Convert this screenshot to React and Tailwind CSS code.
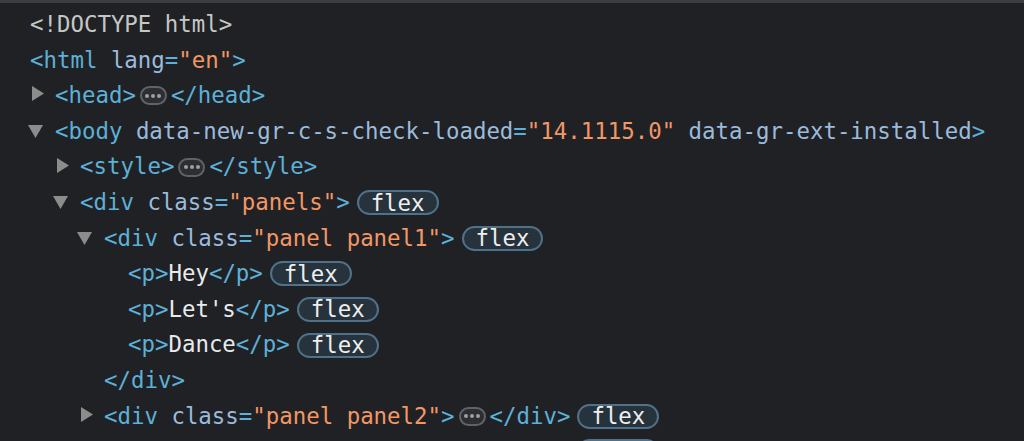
import React from "react";

const Tag = ({ children }) => <span className="text-[#5db0d7]">{children}</span>;
const Attr = ({ children }) => <span className="text-[#9bbbdc]">{children}</span>;
const Val = ({ children }) => <span className="text-[#f29766]">{children}</span>;
const Txt = ({ children }) => <span className="text-[#e8eaed]">{children}</span>;

const Arrow = ({ open }) => (
  <span className="w-[25px] shrink-0 flex items-center">
    {open ? (
      <svg width="17" height="15" viewBox="0 0 17 15" className="-ml-[3px]">
        <path d="M1 1 L16 1 L8.5 14 Z" fill="#8c8c8c" />
      </svg>
    ) : (
      <svg width="14" height="17" viewBox="0 0 14 17" className="ml-[1px] -mt-[4px]">
        <path d="M1 1 L13 8.5 L1 16 Z" fill="#8c8c8c" />
      </svg>
    )}
  </span>
);

const Dots = () => (
  <span className="mx-[4px] inline-flex items-center justify-center w-[27px] h-[19px] rounded-full border-2 border-[#5f6368] bg-[#2d2e31] gap-[2px]">
    <span className="w-[4px] h-[4px] rounded-full bg-[#9aa0a6]" />
    <span className="w-[4px] h-[4px] rounded-full bg-[#9aa0a6]" />
    <span className="w-[4px] h-[4px] rounded-full bg-[#9aa0a6]" />
  </span>
);

const Flex = () => (
  <span className="ml-[7px] inline-flex items-center h-[25px] px-[12px] rounded-full border-2 border-[#4f7189] bg-[#27333c] text-[#eeeeee] leading-none">
    flex
  </span>
);

const Row = ({ pad, arrow, children }) => (
  <div className={`flex items-center h-[35.6px] whitespace-pre ${pad}`}>
    {arrow && <Arrow open={arrow === "open"} />}
    {children}
  </div>
);

export default function App() {
  return (
    <div
      className="w-[1024px] h-[441px] overflow-hidden bg-[#202124] border-t-[3px] border-[#3c3d40] pt-[4px] text-[22.4px]"
      style={{ fontFamily: '"DejaVu Sans Mono", "Liberation Mono", monospace' }}
    >
      <Row pad="pl-[30px]">
        <span className="text-[#c4c7c5]">{"<!DOCTYPE html>"}</span>
      </Row>
      <Row pad="pl-[30px]">
        <Tag>{"<html "}</Tag>
        <Attr>lang</Attr>
        <Tag>=</Tag>
        <Val>"en"</Val>
        <Tag>{">"}</Tag>
      </Row>
      <Row pad="pl-[30px]" arrow="closed">
        <Tag>{"<head>"}</Tag>
        <Dots />
        <Tag>{"</head>"}</Tag>
      </Row>
      <Row pad="pl-[30px]" arrow="open">
        <Tag>{"<body "}</Tag>
        <Attr>data-new-gr-c-s-check-loaded</Attr>
        <Tag>=</Tag>
        <Val>"14.1115.0"</Val>
        <Attr>{" data-gr-ext-installed"}</Attr>
        <Tag>{">"}</Tag>
      </Row>
      <Row pad="pl-[55px]" arrow="closed">
        <Tag>{"<style>"}</Tag>
        <Dots />
        <Tag>{"</style>"}</Tag>
      </Row>
      <Row pad="pl-[55px]" arrow="open">
        <Tag>{"<div "}</Tag>
        <Attr>class</Attr>
        <Tag>=</Tag>
        <Val>"panels"</Val>
        <Tag>{">"}</Tag>
        <Flex />
      </Row>
      <Row pad="pl-[79px]" arrow="open">
        <Tag>{"<div "}</Tag>
        <Attr>class</Attr>
        <Tag>=</Tag>
        <Val>"panel panel1"</Val>
        <Tag>{">"}</Tag>
        <Flex />
      </Row>
      <Row pad="pl-[128px]">
        <Tag>{"<p>"}</Tag>
        <Txt>Hey</Txt>
        <Tag>{"</p>"}</Tag>
        <Flex />
      </Row>
      <Row pad="pl-[128px]">
        <Tag>{"<p>"}</Tag>
        <Txt>Let's</Txt>
        <Tag>{"</p>"}</Tag>
        <Flex />
      </Row>
      <Row pad="pl-[128px]">
        <Tag>{"<p>"}</Tag>
        <Txt>Dance</Txt>
        <Tag>{"</p>"}</Tag>
        <Flex />
      </Row>
      <Row pad="pl-[104px]">
        <Tag>{"</div>"}</Tag>
      </Row>
      <Row pad="pl-[79px]" arrow="closed">
        <Tag>{"<div "}</Tag>
        <Attr>class</Attr>
        <Tag>=</Tag>
        <Val>"panel panel2"</Val>
        <Tag>{">"}</Tag>
        <Dots />
        <Tag>{"</div>"}</Tag>
        <Flex />
      </Row>
      <Row pad="pl-[79px]" arrow="closed">
        <Tag>{"<div "}</Tag>
        <Attr>class</Attr>
        <Tag>=</Tag>
        <Val>"panel panel3"</Val>
        <Tag>{">"}</Tag>
        <Dots />
        <Tag>{"</div>"}</Tag>
        <Flex />
      </Row>
    </div>
  );
}
